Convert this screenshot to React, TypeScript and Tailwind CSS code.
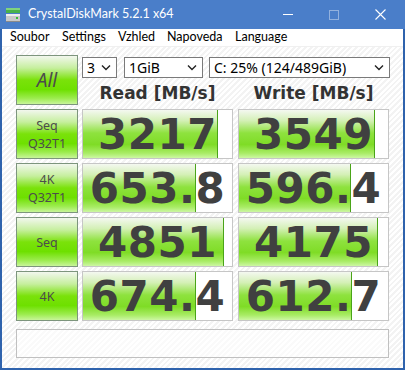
import React from "react";

const rows = [
  { l1: "Seq", l2: "Q32T1", read: "3217", rf: 135, write: "3549", wf: 136 },
  { l1: "4K", l2: "Q32T1", read: "653.8", rf: 113, write: "596.4", wf: 112 },
  { l1: "Seq", l2: "", read: "4851", rf: 141, write: "4175", wf: 139 },
  { l1: "4K", l2: "", read: "674.4", rf: 113, write: "612.7", wf: 113 },
];

const font = { fontFamily: '"Noto Sans", "Open Sans", sans-serif' };
const uiFont = { fontFamily: 'Lato, "Noto Sans", sans-serif' };

function GreenButton({ children, italic }: { children: React.ReactNode; italic?: boolean }) {
  return (
    <div
      className={`w-[62px] h-full border border-[#7d957d] flex flex-col items-center justify-center text-[#4c4c4c] leading-[15px] bg-[linear-gradient(to_bottom,#f2f7ee_0%,#c6ef9e_25%,#7ae20a_50%,#6ee000_70%,#9cec4e_88%,#c8f59a_100%)] ${italic ? "italic text-[19px]" : "text-[12.5px]"}`}
    >
      {children}
    </div>
  );
}

function Cell({ value, fill, className }: { value: string; fill: number; className?: string }) {
  return (
    <div className={`relative w-[151px] h-full border border-[#c6c6c6] bg-white overflow-hidden ${className ?? ""}`}>
      <div
        className="absolute left-0 top-0 bottom-0 border-r border-[#4aa418] bg-[linear-gradient(to_bottom,#f4f8f0_0%,#d4f0b6_22%,#8ee23e_48%,#7fdc26_72%,#a9ec66_90%,#cdf7a4_100%)]"
        style={{ width: fill }}
      />
      <div
        className="relative h-full flex items-center justify-center text-[42px] font-bold text-[#404040] tracking-[0.5px]"
        style={{ fontFamily: '"DejaVu Sans", sans-serif' }}
      >
        {value}
      </div>
    </div>
  );
}

function Select({ text, className }: { text: string; className: string }) {
  return (
    <div className={`h-[21px] border border-[#7a7a7a] bg-white flex items-center justify-between pl-[4px] pr-[5px] text-[14px] text-black ${className}`}>
      <span>{text}</span>
      <svg width="10" height="7" viewBox="0 0 10 7">
        <path d="M1 1.5 L5 5.5 L9 1.5" fill="none" stroke="#222" strokeWidth="1.4" />
      </svg>
    </div>
  );
}

export default function App() {
  return (
    <div className="w-[405px] h-[370px] bg-[#2f63ad] flex flex-col" style={font}>
      {/* title bar */}
      <div className="h-[29px] bg-[#4a7ec9] flex items-center text-white">
        <div className="ml-[5px] w-[16px] h-[16px]">
          <svg width="16" height="16" viewBox="0 0 16 16">
            <rect x="1" y="1" width="14" height="5" fill="#49b24a" />
            <rect x="1" y="1" width="14" height="2" fill="#7fd37e" />
            <rect x="1" y="7" width="14" height="8" fill="#c9c9c9" />
            <rect x="1" y="7" width="14" height="2" fill="#eeeeee" />
            <rect x="1" y="14" width="14" height="1" fill="#8a8a8a" />
            <rect x="11" y="10" width="2" height="2" fill="#36c036" />
          </svg>
        </div>
        <span className="ml-[7px] text-[12.5px]" style={uiFont}>CrystalDiskMark 5.2.1 x64</span>
        <div className="ml-auto mr-[2px] flex items-center">
          <div className="w-[46px] flex justify-center">
            <div className="w-[10px] h-[1px] bg-white" />
          </div>
          <div className="w-[46px] flex justify-center">
            <div className="w-[10px] h-[10px] border border-white/40" />
          </div>
          <div className="w-[46px] flex justify-center">
            <svg width="11" height="11" viewBox="0 0 11 11">
              <path d="M0.5 0.5 L10.5 10.5 M10.5 0.5 L0.5 10.5" stroke="white" strokeWidth="1.1" />
            </svg>
          </div>
        </div>
      </div>
      <div className="flex-1 mx-[2px] mb-[2px] flex flex-col bg-white">
        {/* menu */}
        <div className="h-[18px] flex items-center text-[12.5px] text-black border-b border-[#f0f0f0] pl-[8px]" style={uiFont}>
          <span className="w-[52px]">Soubor</span>
          <span className="w-[56px]">Settings</span>
          <span className="w-[49px]">Vzhled</span>
          <span className="w-[68px]">Napoveda</span>
          <span>Language</span>
        </div>
        {/* content */}
        <div className="flex-1 flex flex-col pl-[14px] pt-[8px] bg-[repeating-linear-gradient(135deg,#ffffff_0px,#ffffff_2px,#f3f3f3_2px,#f3f3f3_4px)]">
          <div className="flex h-[50px]">
            <GreenButton italic>All</GreenButton>
            <div className="ml-[4px] flex flex-col">
              <div className="mt-[2px] flex">
                <Select text="3" className="w-[35px]" />
                <Select text="1GiB" className="ml-[7px] w-[79px]" />
                <Select text="C: 25% (124/489GiB)" className="ml-[6px] w-[181px]" />
              </div>
              <div className="flex mt-[3px] text-[17px] font-bold text-[#333] leading-[24px]" style={{ fontFamily: '"DejaVu Sans", sans-serif' }}>
                <div className="w-[151px] text-center">Read [MB/s]</div>
                <div className="ml-[5px] w-[151px] text-center">Write [MB/s]</div>
              </div>
            </div>
          </div>
          <div className="mt-[4px] flex flex-col gap-[4px]">
            {rows.map((r, i) => (
              <div key={i} className="flex h-[50px]">
                <GreenButton>
                  <span>{r.l1}</span>
                  {r.l2 && <span className="mt-[3px]">{r.l2}</span>}
                </GreenButton>
                <Cell value={r.read} fill={r.rf} className="ml-[4px]" />
                <Cell value={r.write} fill={r.wf} className="ml-[5px]" />
              </div>
            ))}
          </div>
          <div className="mt-[8px] w-[373px] h-[29px] border border-[#c0c0c0] bg-white/60" />
        </div>
      </div>
    </div>
  );
}
